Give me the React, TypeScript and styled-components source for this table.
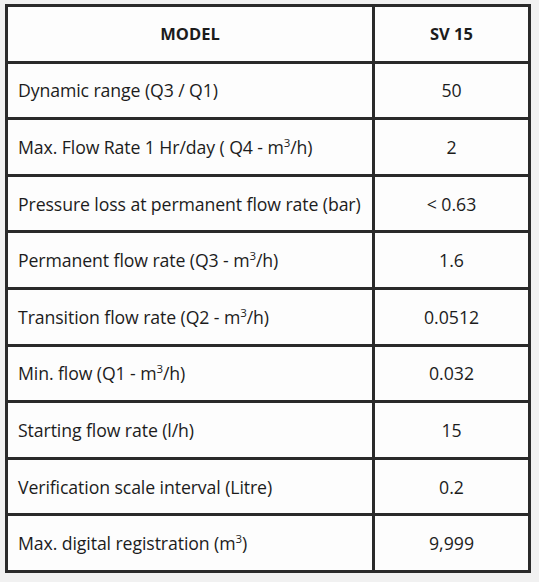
import React from "react"
import styled, { createGlobalStyle } from "styled-components"

type SpecRow = {
    label: React.ReactNode
    value: string
}

const rows: SpecRow[] = [
    { label: "Dynamic range (Q3 / Q1)", value: "50" },
    { label: <>Max. Flow Rate 1 Hr/day ( Q4 - m<sup>3</sup>/h)</>, value: "2" },
    { label: "Pressure loss at permanent flow rate (bar)", value: "< 0.63" },
    { label: <>Permanent flow rate (Q3 - m<sup>3</sup>/h)</>, value: "1.6" },
    { label: <>Transition flow rate (Q2 - m<sup>3</sup>/h)</>, value: "0.0512" },
    { label: <>Min. flow (Q1 - m<sup>3</sup>/h)</>, value: "0.032" },
    { label: "Starting flow rate (l/h)", value: "15" },
    { label: "Verification scale interval (Litre)", value: "0.2" },
    { label: <>Max. digital registration (m<sup>3</sup>)</>, value: "9,999" },
]

const GlobalStyle = createGlobalStyle`
    html, body {
        margin: 0;
        padding: 0;
        background: #f1f1f1;
    }
`

export default function App() {
    return (
        <>
            <GlobalStyle />
            <Page>
                <SpecTable>
                    <colgroup>
                        <col style={{ width: 367 }} />
                        <col style={{ width: 156 }} />
                    </colgroup>
                    <thead>
                        <tr>
                            <HeadCell>MODEL</HeadCell>
                            <HeadCell>SV 15</HeadCell>
                        </tr>
                    </thead>
                    <tbody>
                        {rows.map((row, i) => (
                            <tr key={i}>
                                <LabelCell>{row.label}</LabelCell>
                                <ValueCell>{row.value}</ValueCell>
                            </tr>
                        ))}
                    </tbody>
                </SpecTable>
            </Page>
        </>
    )
}

const Page = styled.div`
    padding: 4px 0 0 5px;
    font-family: "Open Sans", "Noto Sans", sans-serif;
    color: #1c1c1c;
`

const SpecTable = styled.table`
    width: 523px;
    border-collapse: collapse;
    background: #fdfdfd;
    border: 3px solid #2a2a2a;
    table-layout: fixed;

    tr {
        height: 56.6px;
    }
`

const HeadCell = styled.th`
    border: 3px solid #2a2a2a;
    font-size: 16.5px;
    font-weight: 700;
    text-align: center;
    padding: 0;
`

const LabelCell = styled.td`
    border: 3px solid #2a2a2a;
    font-size: 17.7px;
    padding: 0 0 0 10px;
    white-space: nowrap;
    letter-spacing: -0.1px;

    sup {
        font-size: 0.65em;
        line-height: 0;
    }
`

const ValueCell = styled.td`
    border: 3px solid #2a2a2a;
    font-size: 17.7px;
    text-align: center;
    padding: 0;
`
